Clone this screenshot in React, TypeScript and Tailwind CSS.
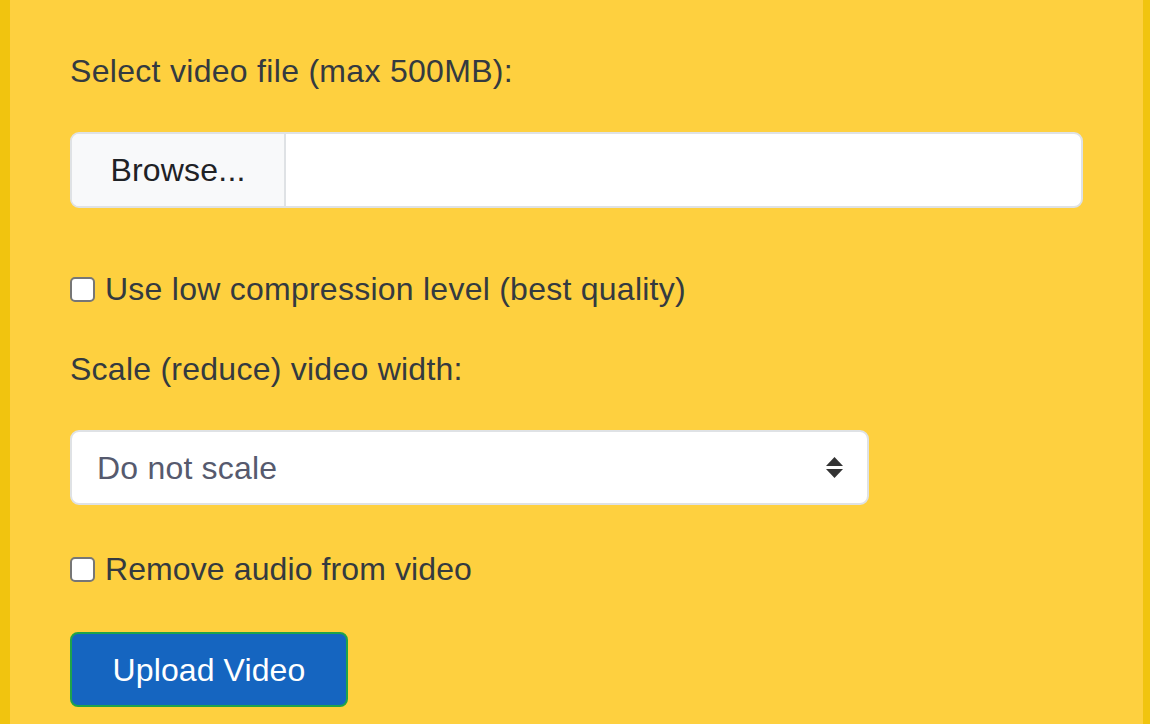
import React from "react";

export default function App() {
  return (
    <div
      className="w-[1150px] h-[724px] overflow-hidden bg-[#fed03f] border-l-[10px] border-r-[7px] border-[#f1c40f] text-[#343a40]"
      style={{ fontFamily: '"Liberation Sans", Arial, sans-serif' }}
    >
      <div className="pl-[60px] pr-[60px] flex flex-col items-start">
        <label className="mt-[47px] text-[32px] leading-[48px] tracking-[0.3px]">Select video file (max 500MB):</label>
        <div className="mt-[37px] w-[1013px] h-[76px] flex bg-white border-2 border-[#dfe2e5] rounded-[9px] overflow-hidden">
          <div className="w-[214px] h-full bg-[#f8f9fa] border-r-2 border-[#dfe2e5] flex items-center justify-center text-[32px] text-[#1f2226] tracking-[0.2px]">
            Browse...
          </div>
          <div className="flex-1" />
        </div>
        <label className="mt-[57px] flex items-center text-[32px] leading-[48px] tracking-[0.25px]">
          <span className="w-[25px] h-[25px] bg-white border-2 border-[#767676] rounded-[5px] mr-[10px]" />
          Use low compression level (best quality)
        </label>
        <label className="mt-[32px] text-[32px] leading-[48px] tracking-[0.25px]">Scale (reduce) video width:</label>
        <div className="mt-[37px] w-[799px] h-[75px] bg-white border-2 border-[#dfe2e5] rounded-[9px] flex items-center justify-between pl-[25px] pr-[24px]">
          <span className="text-[32px] text-[#565a6e] tracking-[0.2px]">Do not scale</span>
          <svg width="17" height="22" viewBox="0 0 17 22">
            <path d="M8.5 0 L17 9 L0 9 Z" fill="#333" />
            <path d="M0 12 L17 12 L8.5 21 Z" fill="#333" />
          </svg>
        </div>
        <label className="mt-[40px] flex items-center text-[32px] leading-[48px] tracking-[0.1px]">
          <span className="w-[25px] h-[25px] bg-white border-2 border-[#767676] rounded-[5px] mr-[10px]" />
          Remove audio from video
        </label>
        <button className="mt-[39px] w-[278px] h-[75px] bg-[#1565c0] border-2 border-[#1fa34a] rounded-[8px] text-white text-[32px] tracking-[0.1px]">
          Upload Video
        </button>
      </div>
    </div>
  );
}
